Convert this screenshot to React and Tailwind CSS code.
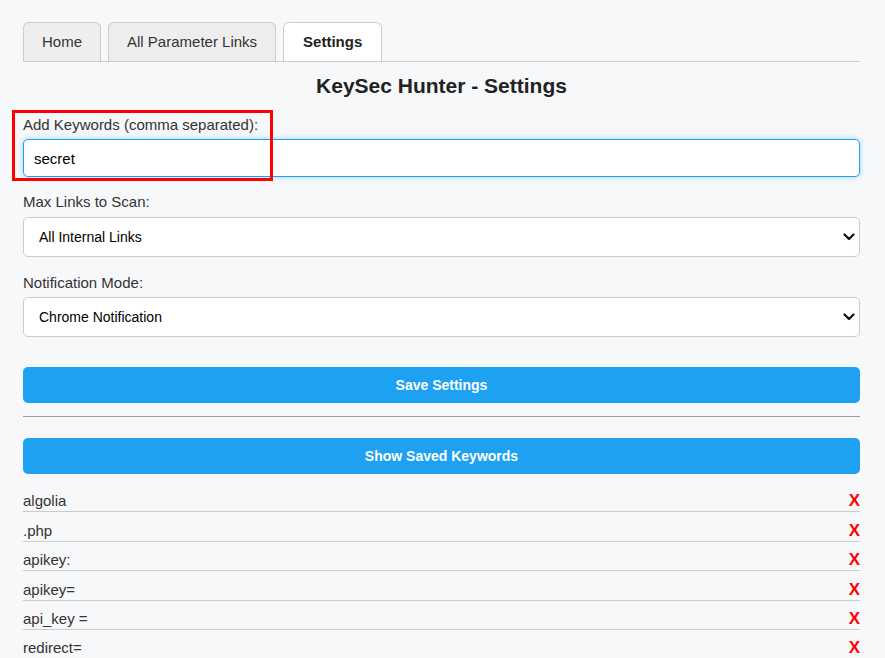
import { useState } from "react"

const keywords = ["algolia", ".php", "apikey:", "apikey=", "api_key =", "redirect="]

function Chevron() {
  return (
    <svg
      className="pointer-events-none absolute right-[5px] top-1/2 -translate-y-1/2"
      width="12"
      height="8"
      viewBox="0 0 12 8"
      fill="none"
    >
      <path d="M1.5 1.5 L6 6 L10.5 1.5" stroke="#111" strokeWidth="2.2" strokeLinecap="round" strokeLinejoin="round" />
    </svg>
  )
}

function Select({ value, options }) {
  return (
    <div className="relative">
      <select
        defaultValue={value}
        className="h-[40px] w-full appearance-none rounded-[5px] border border-[#ccc] bg-white pl-[15px] text-[14px] text-black outline-none"
      >
        {options.map((o) => (
          <option key={o}>{o}</option>
        ))}
      </select>
      <Chevron />
    </div>
  )
}

export default function App() {
  const [tab] = useState("Settings")
  const tabs = ["Home", "All Parameter Links", "Settings"]

  return (
    <div
      className="min-h-screen bg-[#f7f8fa] pl-[23px] pr-[25px] pt-[22px] pb-4 text-[#333]"
      style={{ fontFamily: '"Liberation Sans", Arial, sans-serif' }}
    >
      <div className="flex gap-[7px] border-b border-[#ccc]">
        {tabs.map((t) => (
          <div
            key={t}
            className={
              t === tab
                ? "flex h-[39px] items-center rounded-t-[6px] border border-b-0 border-[#ccc] bg-white px-[19px] text-[15px] font-bold text-[#222]"
                : "flex h-[39px] items-center rounded-t-[6px] border border-b-0 border-[#ccc] bg-[#eee] px-[18px] text-[15px] text-[#333]"
            }
          >
            {t}
          </div>
        ))}
      </div>

      <h1 className="mt-[12px] text-center text-[21px] font-bold leading-[24px] text-[#222]">
        KeySec Hunter - Settings
      </h1>

      <div className="relative mt-[18px]">
        <label className="block text-[15px] leading-[18px]">Add Keywords (comma separated):</label>
        <input
          defaultValue="secret"
          className="mt-[5px] h-[38px] w-full rounded-[5px] border border-[#1da1f2] bg-white px-[10px] text-[15px] text-black shadow-[0_0_5px_rgba(29,161,242,0.45)] outline-none"
        />
        <div className="pointer-events-none absolute left-[-11px] top-[-6px] h-[71px] w-[261px] border-[3px] border-[#f00]" />
      </div>

      <label className="mt-[16px] block text-[15px] leading-[18px]">Max Links to Scan:</label>
      <div className="mt-[6px]">
        <Select value="All Internal Links" options={["All Internal Links", "10", "50", "100"]} />
      </div>

      <label className="mt-[17px] block text-[15px] leading-[18px]">Notification Mode:</label>
      <div className="mt-[5px]">
        <Select value="Chrome Notification" options={["Chrome Notification", "Alert", "None"]} />
      </div>

      <button className="mt-[30px] h-[36px] w-full rounded-[5px] bg-[#1ea1f1] text-[14px] font-bold text-white">
        Save Settings
      </button>

      <hr className="mt-[13px] border-t border-[#9e9e9e]" />

      <button className="mt-[21px] h-[36px] w-full rounded-[5px] bg-[#1ea1f1] text-[14px] font-bold text-white">
        Show Saved Keywords
      </button>

      <ul className="mt-[9px]">
        {keywords.map((k) => (
          <li
            key={k}
            className="flex h-[29.4px] items-end justify-between border-b border-[#ccc] pb-[1px]"
          >
            <span className="text-[15px] leading-[18px]">{k}</span>
            <span className="text-[17px] font-bold leading-[18px] text-[#f00]">X</span>
          </li>
        ))}
      </ul>
    </div>
  )
}
